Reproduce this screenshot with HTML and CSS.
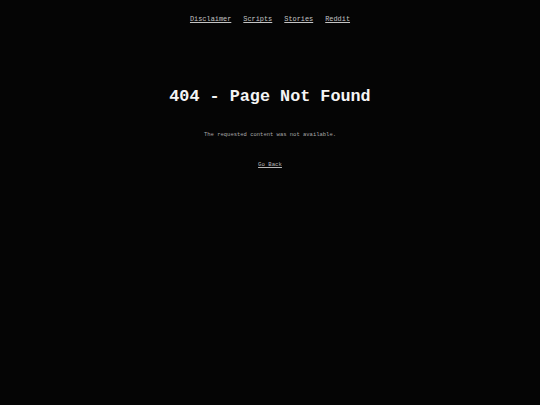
FILE: index.html
```html
<!DOCTYPE html>
<html>
<head>
<meta charset="utf-8">
<link rel="stylesheet" href="styles.css">
</head>
<body>
<nav class="nav">
  <a href="#">Disclaimer</a>
  <a href="#">Scripts</a>
  <a href="#">Stories</a>
  <a href="#">Reddit</a>
</nav>
<main class="main">
  <h1 class="title">404 - Page Not Found</h1>
  <p class="msg">The requested content was not available.</p>
  <a class="back" href="#">Go Back</a>
</main>
</body>
</html>
```
FILE: styles.css
```css
html, body {
  margin: 0;
  padding: 0;
  background: #050505;
  height: 100%;
}
body {
  font-family: "Liberation Mono", "Courier New", monospace;
  color: #ccc;
}
.nav {
  display: flex;
  justify-content: center;
  gap: 12px;
  padding-top: 14px;
  font-size: 6.9px;
  line-height: 10px;
}
.nav a {
  color: #c4c4c4;
  text-decoration: underline;
}
.main {
  display: flex;
  flex-direction: column;
  align-items: center;
}
.title {
  margin: 63px 0 0 0;
  font-size: 16.8px;
  line-height: 20px;
  font-weight: bold;
  color: #f4f4f4;
}
.msg {
  margin: 24px 0 0 0;
  font-size: 5.5px;
  line-height: 8px;
  color: #a8a8a8;
}
.back {
  margin-top: 22px;
  font-size: 5.7px;
  line-height: 8px;
  color: #b8b8b8;
  text-decoration: underline;
}
```
